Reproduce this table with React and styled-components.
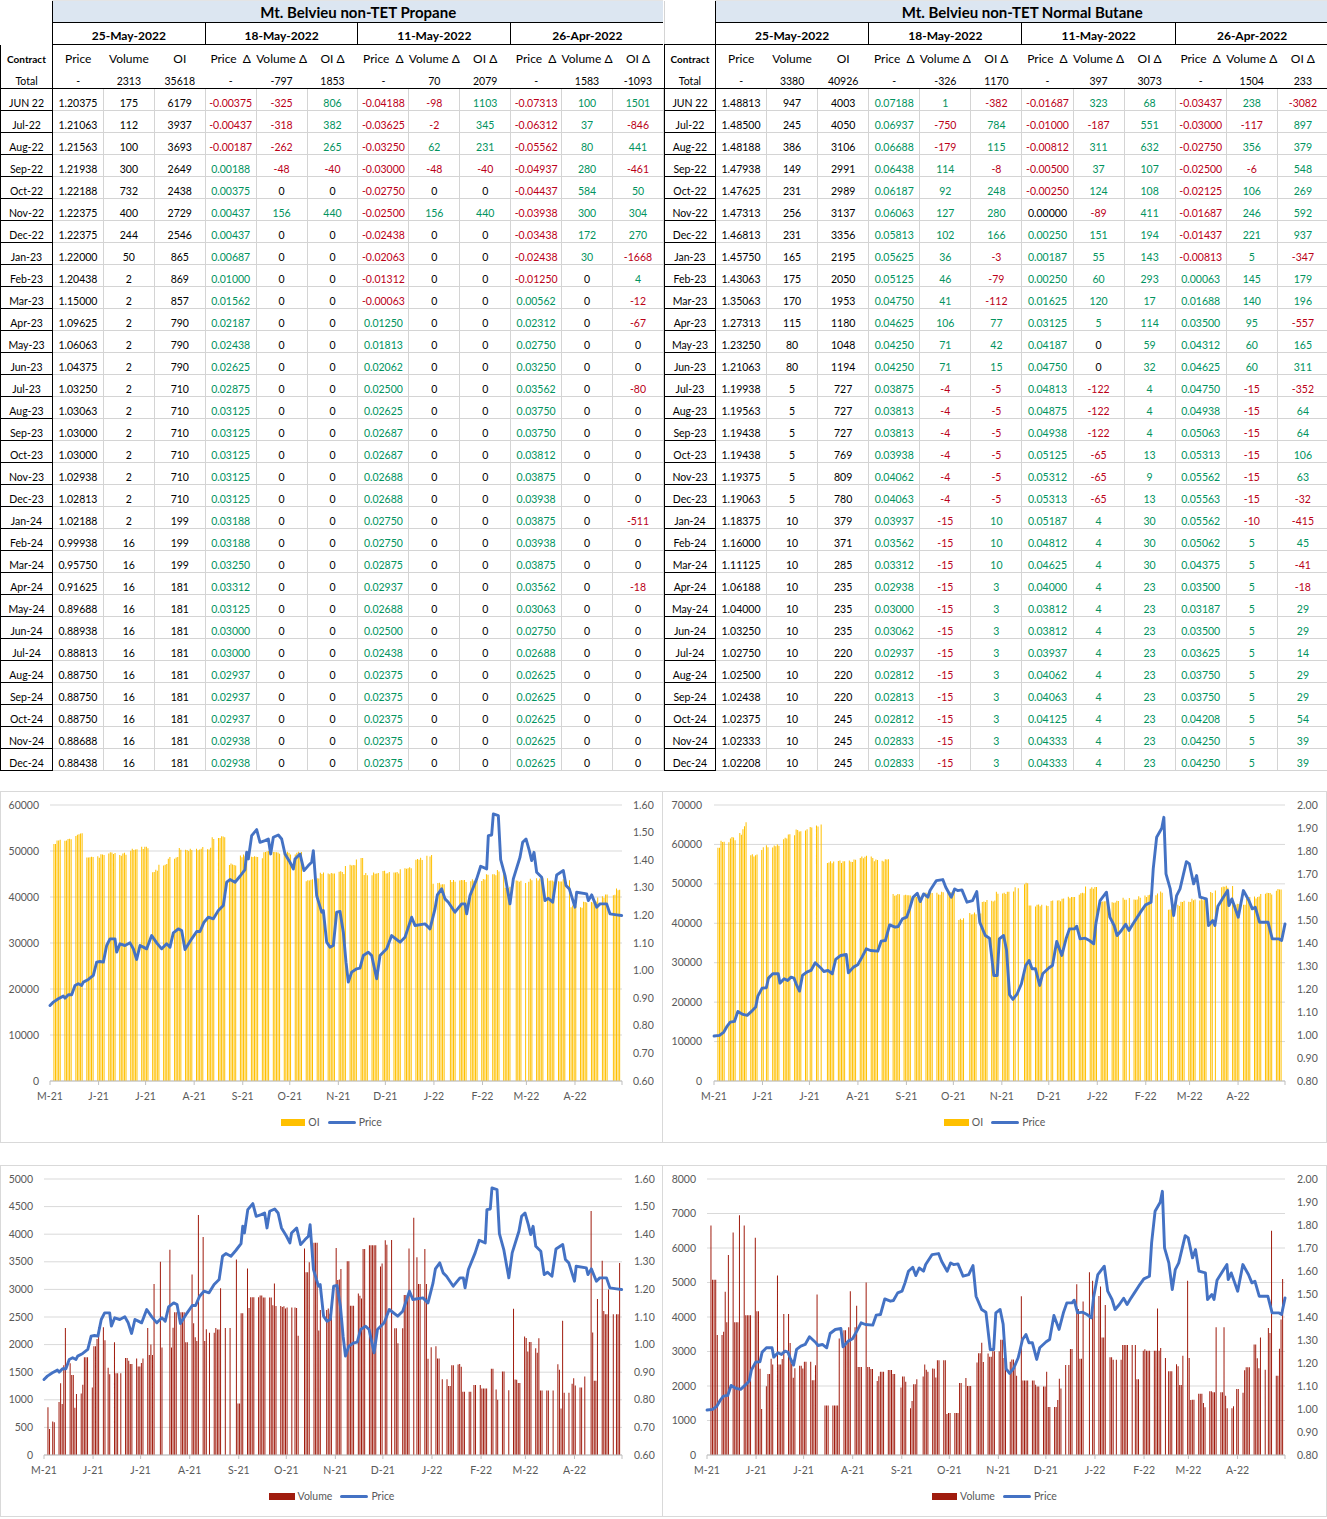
import React from "react";
import styled, { createGlobalStyle } from "styled-components";

const GlobalStyle = createGlobalStyle`
  html, body { margin: 0; padding: 0; background: #ffffff; }
  body { font-family: Lato, "Liberation Sans", "DejaVu Sans", sans-serif; color: #000; }
`;

/* ---------------- data ---------------- */

const DATES = ["25-May-2022", "18-May-2022", "11-May-2022", "26-Apr-2022"];
const HEADS = ["Price", "Volume", "OI", "Price  Δ", "Volume Δ", "OI Δ", "Price  Δ", "Volume Δ", "OI Δ", "Price  Δ", "Volume Δ", "OI Δ"];

const PROPANE_TOTAL = "- 2313 35618 - -797 1853 - 70 2079 - 1583 -1093";
const PROPANE = `JUN 22|1.20375 175 6179 -0.00375 -325 806 -0.04188 -98 1103 -0.07313 100 1501
Jul-22|1.21063 112 3937 -0.00437 -318 382 -0.03625 -2 345 -0.06312 37 -846
Aug-22|1.21563 100 3693 -0.00187 -262 265 -0.03250 62 231 -0.05562 80 441
Sep-22|1.21938 300 2649 0.00188 -48 -40 -0.03000 -48 -40 -0.04937 280 -461
Oct-22|1.22188 732 2438 0.00375 0 0 -0.02750 0 0 -0.04437 584 50
Nov-22|1.22375 400 2729 0.00437 156 440 -0.02500 156 440 -0.03938 300 304
Dec-22|1.22375 244 2546 0.00437 0 0 -0.02438 0 0 -0.03438 172 270
Jan-23|1.22000 50 865 0.00687 0 0 -0.02063 0 0 -0.02438 30 -1668
Feb-23|1.20438 2 869 0.01000 0 0 -0.01312 0 0 -0.01250 0 4
Mar-23|1.15000 2 857 0.01562 0 0 -0.00063 0 0 0.00562 0 -12
Apr-23|1.09625 2 790 0.02187 0 0 0.01250 0 0 0.02312 0 -67
May-23|1.06063 2 790 0.02438 0 0 0.01813 0 0 0.02750 0 0
Jun-23|1.04375 2 790 0.02625 0 0 0.02062 0 0 0.03250 0 0
Jul-23|1.03250 2 710 0.02875 0 0 0.02500 0 0 0.03562 0 -80
Aug-23|1.03063 2 710 0.03125 0 0 0.02625 0 0 0.03750 0 0
Sep-23|1.03000 2 710 0.03125 0 0 0.02687 0 0 0.03750 0 0
Oct-23|1.03000 2 710 0.03125 0 0 0.02687 0 0 0.03812 0 0
Nov-23|1.02938 2 710 0.03125 0 0 0.02688 0 0 0.03875 0 0
Dec-23|1.02813 2 710 0.03125 0 0 0.02688 0 0 0.03938 0 0
Jan-24|1.02188 2 199 0.03188 0 0 0.02750 0 0 0.03875 0 -511
Feb-24|0.99938 16 199 0.03188 0 0 0.02750 0 0 0.03938 0 0
Mar-24|0.95750 16 199 0.03250 0 0 0.02875 0 0 0.03875 0 0
Apr-24|0.91625 16 181 0.03312 0 0 0.02937 0 0 0.03562 0 -18
May-24|0.89688 16 181 0.03125 0 0 0.02688 0 0 0.03063 0 0
Jun-24|0.88938 16 181 0.03000 0 0 0.02500 0 0 0.02750 0 0
Jul-24|0.88813 16 181 0.03000 0 0 0.02438 0 0 0.02688 0 0
Aug-24|0.88750 16 181 0.02937 0 0 0.02375 0 0 0.02625 0 0
Sep-24|0.88750 16 181 0.02937 0 0 0.02375 0 0 0.02625 0 0
Oct-24|0.88750 16 181 0.02937 0 0 0.02375 0 0 0.02625 0 0
Nov-24|0.88688 16 181 0.02938 0 0 0.02375 0 0 0.02625 0 0
Dec-24|0.88438 16 181 0.02938 0 0 0.02375 0 0 0.02625 0 0`;

const BUTANE_TOTAL = "- 3380 40926 - -326 1170 - 397 3073 - 1504 233";
const BUTANE = `JUN 22|1.48813 947 4003 0.07188 1 -382 -0.01687 323 68 -0.03437 238 -3082
Jul-22|1.48500 245 4050 0.06937 -750 784 -0.01000 -187 551 -0.03000 -117 897
Aug-22|1.48188 386 3106 0.06688 -179 115 -0.00812 311 632 -0.02750 356 379
Sep-22|1.47938 149 2991 0.06438 114 -8 -0.00500 37 107 -0.02500 -6 548
Oct-22|1.47625 231 2989 0.06187 92 248 -0.00250 124 108 -0.02125 106 269
Nov-22|1.47313 256 3137 0.06063 127 280 0.00000 -89 411 -0.01687 246 592
Dec-22|1.46813 231 3356 0.05813 102 166 0.00250 151 194 -0.01437 221 937
Jan-23|1.45750 165 2195 0.05625 36 -3 0.00187 55 143 -0.00813 5 -347
Feb-23|1.43063 175 2050 0.05125 46 -79 0.00250 60 293 0.00063 145 179
Mar-23|1.35063 170 1953 0.04750 41 -112 0.01625 120 17 0.01688 140 196
Apr-23|1.27313 115 1180 0.04625 106 77 0.03125 5 114 0.03500 95 -557
May-23|1.23250 80 1048 0.04250 71 42 0.04187 0 59 0.04312 60 165
Jun-23|1.21063 80 1194 0.04250 71 15 0.04750 0 32 0.04625 60 311
Jul-23|1.19938 5 727 0.03875 -4 -5 0.04813 -122 4 0.04750 -15 -352
Aug-23|1.19563 5 727 0.03813 -4 -5 0.04875 -122 4 0.04938 -15 64
Sep-23|1.19438 5 727 0.03813 -4 -5 0.04938 -122 4 0.05063 -15 64
Oct-23|1.19438 5 769 0.03938 -4 -5 0.05125 -65 13 0.05313 -15 106
Nov-23|1.19375 5 809 0.04062 -4 -5 0.05312 -65 9 0.05562 -15 63
Dec-23|1.19063 5 780 0.04063 -4 -5 0.05313 -65 13 0.05563 -15 -32
Jan-24|1.18375 10 379 0.03937 -15 10 0.05187 4 30 0.05562 -10 -415
Feb-24|1.16000 10 371 0.03562 -15 10 0.04812 4 30 0.05062 5 45
Mar-24|1.11125 10 285 0.03312 -15 10 0.04625 4 30 0.04375 5 -41
Apr-24|1.06188 10 235 0.02938 -15 3 0.04000 4 23 0.03500 5 -18
May-24|1.04000 10 235 0.03000 -15 3 0.03812 4 23 0.03187 5 29
Jun-24|1.03250 10 235 0.03062 -15 3 0.03812 4 23 0.03500 5 29
Jul-24|1.02750 10 220 0.02937 -15 3 0.03937 4 23 0.03625 5 14
Aug-24|1.02500 10 220 0.02812 -15 3 0.04062 4 23 0.03750 5 29
Sep-24|1.02438 10 220 0.02813 -15 3 0.04063 4 23 0.03750 5 29
Oct-24|1.02375 10 245 0.02812 -15 3 0.04125 4 23 0.04208 5 54
Nov-24|1.02333 10 245 0.02833 -15 3 0.04333 4 23 0.04250 5 39
Dec-24|1.02208 10 245 0.02833 -15 3 0.04333 4 23 0.04250 5 39`;

const parseRows = (txt) =>
  txt.split("\n").map((line) => {
    const [c, rest] = line.split("|");
    return { contract: c, values: rest.trim().split(/\s+/) };
  });

const toneOf = (s, i) => {
  if (i < 3 || s === "-") return "base";
  const n = parseFloat(s);
  if (n < 0) return "neg";
  if (n > 0) return "pos";
  return "base";
};

/* ---------------- chart data ---------------- */

function mulberry(seed) {
  let a = seed;
  return function () {
    a |= 0;
    a = (a + 0x6d2b79f5) | 0;
    let t = Math.imul(a ^ (a >>> 15), 1 | a);
    t = (t + Math.imul(t ^ (t >>> 7), 61 | t)) ^ t;
    return ((t ^ (t >>> 14)) >>> 0) / 4294967296;
  };
}

const NDAYS = 365;
function makeDays(seed, skip) {
  const r = mulberry(seed);
  const out = [];
  for (let i = 0; i < NDAYS; i++) {
    const dow = (i + 5) % 7;
    if (dow >= 5) continue;
    if (r() < skip) continue;
    out.push((i + 0.5) / NDAYS);
  }
  return out;
}

function segAt(segs, x) {
  let s = segs[0];
  for (const g of segs) {
    if (x >= g[0]) s = g;
    else break;
  }
  return s;
}

function oiSeries(x0, w, steps, seed) {
  const r = mulberry(seed);
  return makeDays(seed + 7, 0.035).map((t) => {
    const v = segAt(steps, x0 + t * w)[1];
    return [t, v * (1 + (r() - 0.5) * 0.014)];
  });
}

function volSeries(x0, w, segs, spikes, seed) {
  const r = mulberry(seed);
  let prev = null;
  const out = makeDays(seed + 3, 0.08).map((t) => {
    const [, lo, hi] = segAt(segs, x0 + t * w);
    let v;
    if (prev !== null && prev >= lo && prev <= hi && r() < 0.45) v = prev;
    else v = lo + r() * (hi - lo);
    prev = v;
    return [t, v];
  });
  spikes.forEach(([sx, sv]) => {
    const st = (sx - x0) / w;
    let bi = 0;
    let bd = 9;
    out.forEach((b, i) => {
      const d = Math.abs(b[0] - st);
      if (d < bd) {
        bd = d;
        bi = i;
      }
    });
    out[bi][1] = sv;
  });
  return out;
}

const OI1_STEPS = [
  [0, 51500], [57, 52200], [65, 52600], [72, 53300], [78, 53700], [86, 48800], [100, 49200], [110, 49500],
  [118, 49300], [130, 50300], [140, 50700], [150, 45700], [158, 47000], [168, 48600], [178, 50300], [200, 50600],
  [212, 52900], [228, 47000], [240, 49000], [253, 48700], [263, 49700], [283, 49500], [303, 43500], [310, 44000],
  [320, 45200], [333, 45300], [345, 46800], [356, 48500], [364, 45000], [383, 45400], [400, 46300], [413, 48200],
  [424, 49000], [432, 43000], [445, 43500], [470, 43700], [486, 44800], [496, 45700], [505, 42200], [513, 43300],
  [530, 43800], [548, 43600], [570, 37900], [583, 39000], [597, 39900], [605, 40500], [616, 41600],
];

const OI2_STEPS = [
  [0, 59500], [720, 60800], [730, 61500], [737, 62700], [742, 64200], [746, 65300], [749, 57300], [758, 58200],
  [762, 59500], [775, 59800], [781, 61300], [788, 62200], [796, 63500], [809, 64000], [815, 64700], [822, 55500],
  [839, 55700], [854, 56500], [860, 56800], [873, 56000], [890, 47300], [909, 47000], [924, 47500], [941, 47800],
  [958, 41000], [966, 42500], [981, 45700], [996, 47700], [1007, 48000], [1015, 49200], [1020, 50200], [1029, 44500],
  [1049, 45800], [1062, 46500], [1075, 47500], [1085, 49000], [1098, 45500], [1120, 46200], [1139, 46800],
  [1149, 47300], [1158, 48000], [1164, 43500], [1171, 44500], [1181, 45500], [1192, 46000], [1207, 48000],
  [1222, 49200], [1234, 45000], [1247, 46500], [1260, 47500], [1273, 48500],
];

const VOL1_SEGS = [
  [0, 450, 1250], [60, 700, 1700], [75, 800, 1800], [86, 1100, 2050], [97, 2000, 2450], [108, 1450, 2050],
  [128, 1550, 1750], [140, 1650, 1850], [150, 1750, 2300], [163, 1450, 2200], [173, 2300, 2700], [185, 1950, 2400],
  [205, 2200, 2350], [217, 2000, 2650], [228, 900, 2500], [240, 2550, 2800], [250, 2850, 3400], [263, 2700, 3200],
  [275, 2640, 2700], [297, 1350, 2450], [305, 3100, 3850], [318, 2200, 2700], [333, 2800, 3750], [350, 2600, 3000],
  [362, 3600, 3850], [376, 3400, 3500], [384, 3800, 3900], [392, 2000, 2500], [403, 2900, 2900], [409, 3500, 3800],
  [418, 3100, 3100], [428, 1700, 2650], [440, 740, 1800], [451, 1550, 1700], [462, 1140, 1500], [474, 1140, 1570],
  [484, 950, 1600], [496, 840, 1520], [506, 1050, 1500], [514, 1300, 1600], [524, 1850, 2270], [540, 1150, 1350],
  [549, 980, 1700], [560, 840, 1560], [572, 1150, 1450], [585, 1150, 2300], [596, 2550, 3000], [604, 2550, 2550],
];
const VOL1_SPIKES = [
  [66, 2300], [147, 2300], [155, 3100], [160, 3500], [170, 3720], [191, 3270], [200, 4350], [202, 3950], [222, 3020],
  [237, 3540], [248, 3380], [303, 3740], [336, 3750], [413, 4300], [425, 3730], [512, 2650], [563, 2430], [588, 4420],
  [602, 3520], [620, 3480], [610, 3000],
];

const VOL2_SEGS = [
  [0, 4800, 6700], [716, 3000, 4800], [726, 3850, 3850], [744, 4050, 4050], [753, 4000, 5000], [760, 1200, 2600],
  [770, 2400, 3100], [783, 2400, 4250], [793, 2200, 2700], [804, 2150, 3100], [815, 2550, 3450], [824, 1250, 2500],
  [838, 3050, 3800], [850, 3350, 4750], [858, 2550, 2550], [870, 2100, 2550], [884, 2050, 2850], [896, 1750, 2400],
  [907, 1350, 2500], [915, 1500, 2750], [926, 2150, 2700], [936, 2750, 2750], [946, 1150, 1700], [959, 1500, 2300],
  [966, 2000, 2000], [974, 2550, 3350], [981, 2600, 3300], [992, 2700, 3350], [1004, 2700, 2800], [1014, 2100, 2600],
  [1027, 1850, 2600], [1038, 1600, 3300], [1048, 1200, 2200], [1059, 1600, 3600], [1067, 1600, 4400],
  [1082, 4450, 4450], [1091, 3850, 5050], [1101, 3400, 3900], [1109, 2650, 3000], [1121, 2600, 3550],
  [1131, 2000, 3300], [1142, 3000, 3150], [1153, 2700, 3150], [1163, 1800, 2850], [1173, 1500, 3950],
  [1182, 2800, 3800], [1190, 1500, 1900], [1201, 1300, 1900], [1212, 1700, 2000], [1223, 1300, 2300],
  [1233, 1300, 3450], [1242, 1600, 2550], [1250, 2400, 3250], [1259, 2400, 3850], [1270, 2300, 2300],
  [1278, 3050, 4100],
];
const VOL2_SPIKES = [
  [709, 6700], [710.5, 6650], [728, 5800], [731, 6450], [740, 7000], [741.5, 6950], [743, 6650], [756, 6300],
  [776, 5200], [821, 4650], [852, 4750], [864, 5000], [1021, 4600], [1075, 4950], [1090, 5300], [1092, 5050],
  [1106, 4350], [1157, 4250], [1188, 5050], [1218, 3700], [1224, 3700], [1271, 6500], [1283, 5100],
];

/* price traces (zoom pixel coordinates -> [t, value]) */
const Z5 = [150,650,160,640,175,630,190,622,195,628,205,618,215,618,225,590,235,585,245,590,250,580,265,572,280,560,290,520,300,518,310,520,320,470,330,450,345,450,350,490,360,465,375,470,390,462,400,480,410,512,420,470,430,475,440,480,455,440,470,462,485,480,500,465,510,475,520,432,535,420,545,425,555,482,575,450,590,428,600,428,612,400,625,385,640,390,655,365,670,350,680,280,690,272,705,280,720,262,735,242,740,190,745,210,755,140,770,122,780,160,795,155,805,150,812,195,820,145,835,138,845,150,855,195,870,220,880,240,885,210,900,195,912,245,925,230,935,220,940,185,950,320,965,370,970,365,980,460,990,475];
const Z6 = [0,475,10,470,20,370,30,368,40,430,48,520,55,580,65,550,80,540,90,538,100,500,115,490,125,500,140,570,150,500,170,480,185,440,210,460,225,445,245,385,255,410,285,405,300,420,315,360,322,318,335,300,345,330,355,340,375,370,395,345,405,345,410,375,420,320,440,270,452,232,470,240,475,140,485,138,490,75,505,80,512,212,525,260,540,345,550,270,570,205,578,160,588,150,598,185,605,215,612,190,620,250,635,265,645,335,655,328,668,340,680,258,700,245,708,290,718,300,735,355,740,310,770,315,775,335,785,318,800,355,810,345,830,345,840,375,860,378,875,380];

const Z9 = [127,742,140,740,150,730,158,712,165,700,175,698,183,668,195,677,205,680,215,668,225,655,230,622,240,598,250,597,255,568,265,555,278,555,282,583,292,570,300,575,308,565,315,568,320,585,328,607,335,560,345,550,355,545,365,522,380,540,385,548,395,545,405,555,413,512,425,500,438,497,443,552,455,535,465,528,475,505,485,480,495,485,512,487,520,457,530,455,540,408,553,415,560,413,570,390,580,385,587,360,595,325,605,313,612,338,620,315,630,325,635,305,650,275,665,272,672,295,685,325,693,300,700,305,710,303,722,340,735,335,745,308,752,400,765,440,775,448,785,560,793,560,798,450,808,440,815,484,822,618,830,632,840,615,850,585,860,530,868,515,875,540,883,540,893,590,900,555,915,537,923,530,933,458,945,500,955,450,963,420,975,420,980,412,988,450,1000,448,1010,455,1020,465,1025,405,1035,335,1050,310,1058,385,1068,410,1075,440,1085,425,1095,406,1103,425,1110,410,1120,390,1130,370,1142,348,1155,340,1160,240,1168,145,1180,118,1185,85,1190,255,1200,300,1208,380,1215,320,1223,300,1238,218,1245,225,1255,285,1262,260,1270,325,1285,330,1290,410,1300,395,1305,410,1312,352,1325,325,1335,305,1338,350,1345,330,1360,385,1372,305,1385,335,1393,360,1400,355,1410,400,1430,400,1440,450,1455,450,1462,455,1470,405];

function pairs(arr, fn) {
  const out = [];
  for (let i = 0; i < arr.length; i += 2) out.push(fn(arr[i], arr[i + 1]));
  return out;
}

const PRICE_PROPANE = [
  ...pairs(Z5, (zx, zy) => [(zx / 3 - 50) / 572, 1.6 - ((zy - 48) / 829) * 1.0]),
  ...pairs(Z6.slice(2), (zx, zy) => [(330 + zx / 3 - 50) / 572, 1.6 - ((zy - 48) / 829) * 1.0]),
];
const PRICE_BUTANE = pairs(Z9, (zx, zy) => [(660 + zx / 2.35 - 714) / 571.5, 2.0 - ((zy - 48) / 829) * 1.2]);

const BARS_OI1 = oiSeries(50, 572, OI1_STEPS, 11);
const BARS_OI2 = oiSeries(714, 571.5, OI2_STEPS, 23);
const BARS_V1 = volSeries(44, 578, VOL1_SEGS, VOL1_SPIKES, 37);
const BARS_V2 = volSeries(707, 578, VOL2_SEGS, VOL2_SPIKES, 51);

const MONTHS = ["M-21", "J-21", "J-21", "A-21", "S-21", "O-21", "N-21", "D-21", "J-22", "F-22", "M-22", "A-22"];
const MONTH_DAYS = [0, 31, 61, 92, 123, 153, 184, 214, 245, 276, 304, 335, 365];

const YELLOW = "#ffc000";
const RED = "#a01c0e";
const BLUE = "#4472c4";

const CHARTS = [
  { id: "c1", right: false, plotL: 49, plotR: 621, lMax: 60000, lStep: 10000, lx: 38, rMin: 0.6, rMax: 1.6, rx: 632, bars: BARS_OI1, color: YELLOW, price: PRICE_PROPANE, legend: "OI", sw: 24 },
  { id: "c2", right: true, plotL: 51, plotR: 622, lMax: 70000, lStep: 10000, lx: 39, rMin: 0.8, rMax: 2.0, rx: 634, bars: BARS_OI2, color: YELLOW, price: PRICE_BUTANE, legend: "OI", sw: 25 },
  { id: "c3", right: false, plotL: 43, plotR: 621, lMax: 5000, lStep: 500, lx: 32, rMin: 0.6, rMax: 1.6, rx: 633, bars: BARS_V1, color: RED, price: PRICE_PROPANE, legend: "Volume", sw: 26 },
  { id: "c4", right: true, plotL: 44, plotR: 622, lMax: 8000, lStep: 1000, lx: 33, rMin: 0.8, rMax: 2.0, rx: 634, bars: BARS_V2, color: RED, price: PRICE_BUTANE, legend: "Volume", sw: 25 },
];

/* ---------------- styled components ---------------- */

const Page = styled.div`
  width: 1327px;
  padding-bottom: 1px;
`;

const Tables = styled.div`
  display: flex;
  align-items: flex-start;
`;

const Sheet = styled.table`
  border-collapse: collapse;
  table-layout: fixed;
  width: ${(p) => p.$w}px;
  font-family: Lato, "Liberation Sans", "DejaVu Sans", sans-serif;
`;

const Col = styled.col`
  width: ${(p) => p.$w}px;
`;

const Row = styled.tr`
  height: 22px;
`;

const CornerCell = styled.td`
  padding: 0;
  border-left: ${(p) => (p.$right ? "1px solid #d4d4d4" : "none")};
`;

const CornerLower = styled.td`
  padding: 0;
  border-left: ${(p) => (p.$right ? "1px solid #d4d4d4" : "none")};
  border-bottom: ${(p) => (p.$right ? "1px solid #000" : "none")};
`;

const TitleCell = styled.th`
  background: #dce6f1;
  font-size: 15px;
  font-weight: 700;
  text-align: center;
  vertical-align: bottom;
  padding: 0 0 1px;
  line-height: 18px;
  border-left: 1px solid #000;
  border-bottom: 1px solid #000;
  border-top: 1px solid #e4e4e4;
`;

const DateCell = styled.th`
  font-size: 12px;
  font-weight: 700;
  text-align: center;
  vertical-align: bottom;
  padding: 0 0 1px;
  line-height: 15px;
  border-left: 1px solid #000;
  border-bottom: 1px solid #000;
`;

const HeadCell = styled.th`
  font-size: 12px;
  font-weight: 400;
  text-align: center;
  vertical-align: bottom;
  white-space: pre;
  padding: 0 0 1px;
  line-height: 15px;
  overflow: visible;
`;

const ContractHead = styled.th`
  font-size: 10px;
  font-weight: 700;
  text-align: center;
  vertical-align: bottom;
  padding: 0 0 1px;
  line-height: 14px;
  border-left: 1px solid #000;
  border-right: 1px solid #000;
`;

const TotalContract = styled.td`
  font-size: 10.5px;
  text-align: center;
  vertical-align: bottom;
  padding: 0;
  line-height: 14px;
  border-left: 1px solid #000;
  border-right: 1px solid #000;
  border-bottom: 1px solid #000;
`;

const TotalCell = styled.td`
  font-size: 10.5px;
  text-align: center;
  vertical-align: bottom;
  padding: 0;
  line-height: 14px;
  border-bottom: 1px solid #000;
`;

const ContractCell = styled.td`
  font-size: 10.5px;
  text-align: center;
  vertical-align: bottom;
  white-space: nowrap;
  padding: 0;
  line-height: 14px;
  border: 1px solid #000;
`;

const TONES = { base: "#000000", pos: "#00935e", neg: "#bb0018" };

const Cell = styled.td`
  font-size: 10.5px;
  text-align: center;
  vertical-align: bottom;
  white-space: nowrap;
  padding: 0;
  line-height: 14px;
  color: ${(p) => TONES[p.$tone]};
  border-right: 1px solid #d4d4d4;
  border-bottom: 1px solid #d4d4d4;
`;

const ChartGrid = styled.div`
  display: grid;
  grid-template-columns: 663px 664px;
  row-gap: 22px;
  margin-top: 20px;
`;

const ChartBox = styled.div`
  box-sizing: border-box;
  height: 352px;
  border: 1px solid #d9d9d9;
  border-left: ${(p) => (p.$right ? "none" : "1px solid #d9d9d9")};
  display: flex;
  flex-direction: column;
`;

const Plot = styled.svg`
  display: block;
  flex: none;
  font-family: Lato, "Liberation Sans", sans-serif;
`;

const Legend = styled.div`
  height: 24px;
  display: flex;
  justify-content: center;
  align-items: center;
  gap: 8px;
  font-size: 10.5px;
  color: #595959;
  font-family: Lato, "Liberation Sans", sans-serif;
`;

const LegendItem = styled.span`
  display: inline-flex;
  align-items: center;
  gap: 3px;
`;

const Swatch = styled.span`
  display: inline-block;
  width: ${(p) => p.$w}px;
  height: 7px;
  background: ${(p) => p.$c};
`;

const LineSwatch = styled.span`
  display: inline-block;
  width: 28px;
  height: 3px;
  border-radius: 2px;
  background: ${BLUE};
`;

/* ---------------- components ---------------- */

function DataSheet({ title, total, rows, right }) {
  const w = right ? 664 : 663;
  const cw = right ? 51 : 52;
  const dw = (w - cw) / 12;
  return (
    <Sheet $w={w}>
      <colgroup>
        <Col $w={cw} />
        {HEADS.map((_, i) => (
          <Col key={i} $w={dw} />
        ))}
      </colgroup>
      <tbody>
        <Row>
          <CornerCell $right={right} />
          <TitleCell colSpan={12}>{title}</TitleCell>
        </Row>
        <Row>
          <CornerLower $right={right} />
          {DATES.map((d) => (
            <DateCell key={d} colSpan={3}>
              {d}
            </DateCell>
          ))}
        </Row>
        <Row>
          <ContractHead>Contract</ContractHead>
          {HEADS.map((h, i) => (
            <HeadCell key={i}>{h}</HeadCell>
          ))}
        </Row>
        <Row>
          <TotalContract>Total</TotalContract>
          {total.split(" ").map((v, i) => (
            <TotalCell key={i}>{v}</TotalCell>
          ))}
        </Row>
        {rows.map((r) => (
          <Row key={r.contract}>
            <ContractCell>{r.contract}</ContractCell>
            {r.values.map((v, i) => (
              <Cell key={i} $tone={toneOf(v, i)}>
                {v}
              </Cell>
            ))}
          </Row>
        ))}
      </tbody>
    </Sheet>
  );
}

const TOP = 13;
const BOTTOM = 289;

function Chart({ c }) {
  const width = c.right ? 663 : 661;
  const H = BOTTOM - TOP;
  const W = c.plotR - c.plotL;
  const yL = (v) => BOTTOM - (v / c.lMax) * H;
  const yR = (v) => BOTTOM - ((v - c.rMin) / (c.rMax - c.rMin)) * H;
  const xT = (t) => c.plotL + t * W;

  const grid = [];
  for (let v = 0; v <= c.lMax + 1e-6; v += c.lStep) grid.push(v);
  const rights = [];
  const nR = Math.round((c.rMax - c.rMin) / 0.1);
  for (let i = 0; i <= nR; i++) rights.push(c.rMin + i * 0.1);

  const bw = 1.0;
  const barPath = c.bars
    .map(([t, v]) => {
      const x = xT(t) - bw / 2;
      const y = yL(v);
      return `M${x.toFixed(2)} ${y.toFixed(2)}h${bw}V${BOTTOM}h-${bw}Z`;
    })
    .join("");

  const linePath = c.price
    .map(([t, v], i) => `${i ? "L" : "M"}${xT(t).toFixed(2)} ${yR(v).toFixed(2)}`)
    .join("");

  return (
    <ChartBox $right={c.right}>
      <Plot width={width} height={318} viewBox={`0 0 ${width} 318`}>
        {grid.map((v) => (
          <line key={v} x1={c.plotL} x2={c.plotR} y1={yL(v)} y2={yL(v)} stroke="#d9d9d9" strokeWidth="1" />
        ))}
        {grid.map((v) => (
          <text key={`l${v}`} x={c.lx} y={yL(v) + 3.6} textAnchor="end" fontSize="10.5" fill="#595959">
            {v}
          </text>
        ))}
        {rights.map((v) => (
          <text key={`r${v.toFixed(2)}`} x={c.rx} y={yR(v) + 3.6} fontSize="10.5" fill="#595959">
            {v.toFixed(2)}
          </text>
        ))}
        <path d={barPath} fill={c.color} />
        <line x1={c.plotL} x2={c.plotR} y1={BOTTOM} y2={BOTTOM} stroke="#bfbfbf" strokeWidth="1" />
        {MONTH_DAYS.map((d) => {
          const x = c.plotL + (d / NDAYS) * W;
          return <line key={`t${d}`} x1={x} x2={x} y1={BOTTOM} y2={BOTTOM + 4} stroke="#bfbfbf" strokeWidth="1" />;
        })}
        {MONTHS.map((m, i) => (
          <text
            key={`m${i}`}
            x={c.plotL + (MONTH_DAYS[i] / NDAYS) * W}
            y={307.5}
            textAnchor="middle"
            fontSize="10.5"
            fill="#595959"
          >
            {m}
          </text>
        ))}
        <path d={linePath} fill="none" stroke={BLUE} strokeWidth="2.9" strokeLinejoin="round" strokeLinecap="round" />
      </Plot>
      <Legend>
        <LegendItem>
          <Swatch $w={c.sw} $c={c.color} />
          {c.legend}
        </LegendItem>
        <LegendItem>
          <LineSwatch />
          Price
        </LegendItem>
      </Legend>
    </ChartBox>
  );
}

const PROPANE_ROWS = parseRows(PROPANE);
const BUTANE_ROWS = parseRows(BUTANE);

export default function App() {
  return (
    <Page>
      <GlobalStyle />
      <Tables>
        <DataSheet title="Mt. Belvieu non-TET Propane" total={PROPANE_TOTAL} rows={PROPANE_ROWS} right={false} />
        <DataSheet title="Mt. Belvieu non-TET Normal Butane" total={BUTANE_TOTAL} rows={BUTANE_ROWS} right />
      </Tables>
      <ChartGrid>
        {CHARTS.map((c) => (
          <Chart key={c.id} c={c} />
        ))}
      </ChartGrid>
    </Page>
  );
}
